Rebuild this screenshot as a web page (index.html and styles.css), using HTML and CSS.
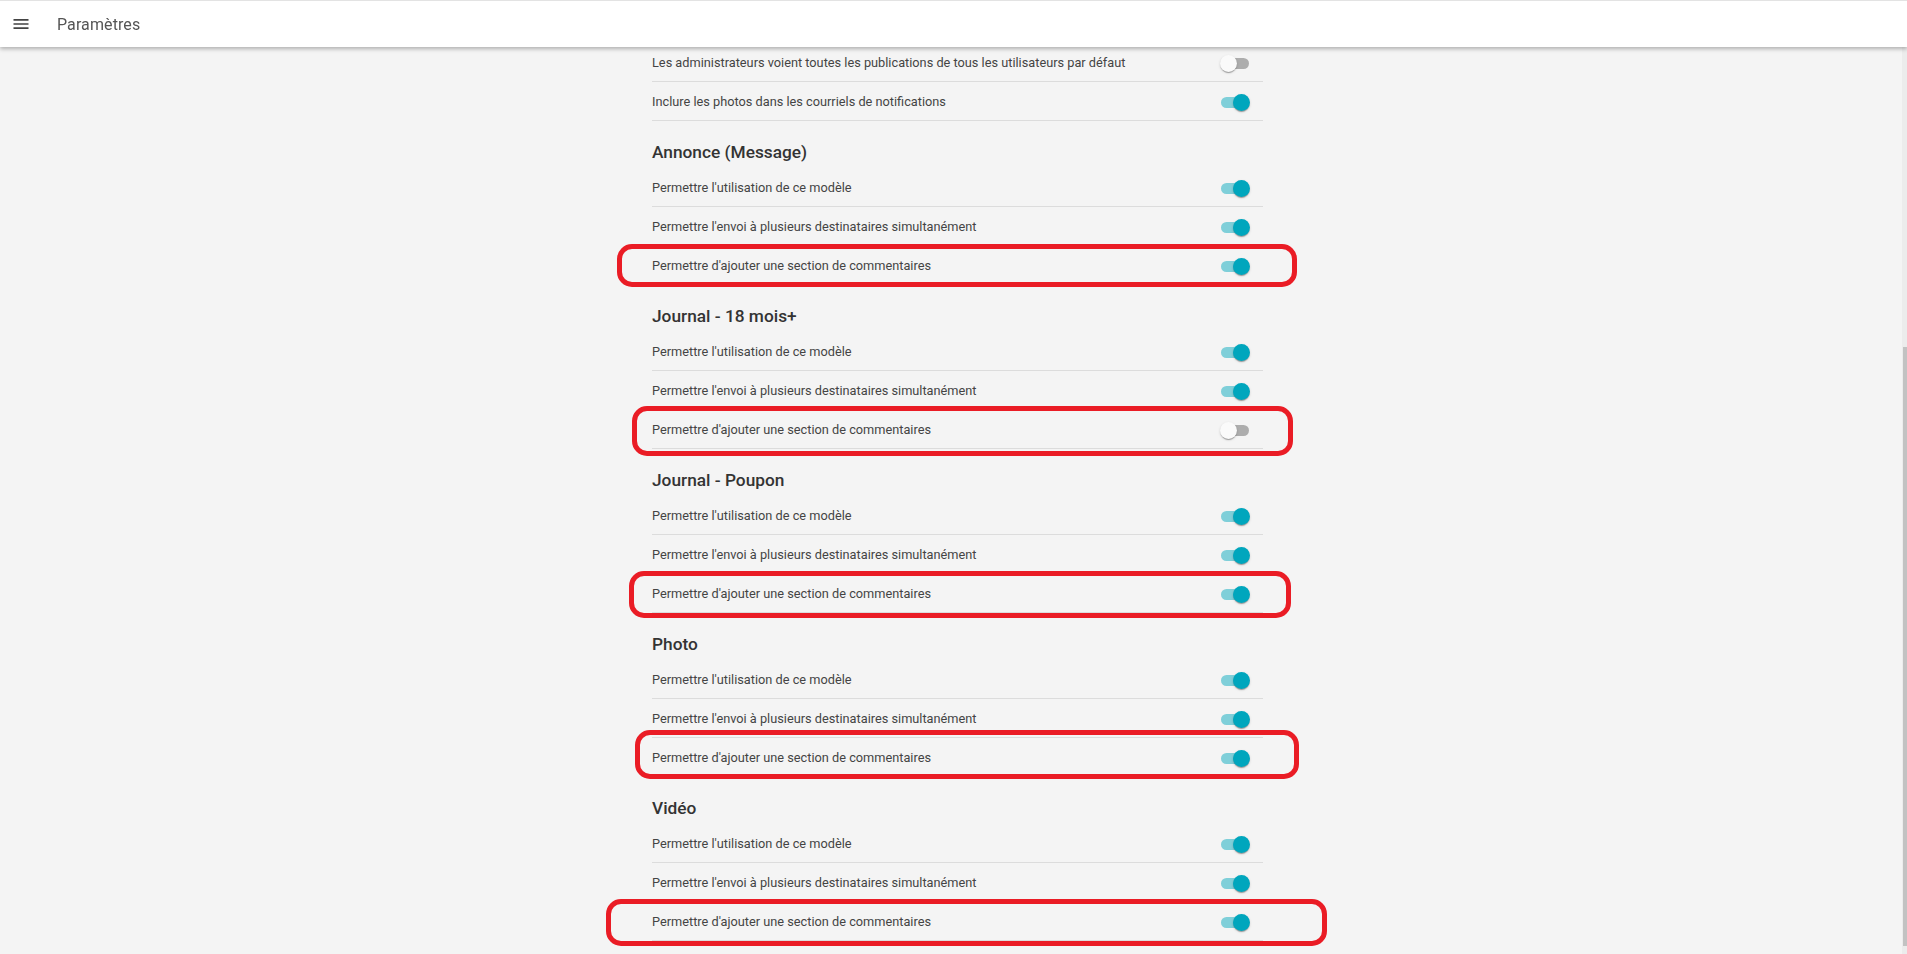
FILE: index.html
```html
<!DOCTYPE html>
<html lang="fr">
<head>
<meta charset="utf-8">
<title>Paramètres</title>
<link rel="stylesheet" href="styles.css">
</head>
<body>
<header class="topbar">
  <button class="menu-btn" aria-label="Menu">
    <svg viewBox="0 0 24 24" width="20" height="20"><path fill="#444" d="M3 18h18v-2H3v2zm0-5h18v-2H3v2zm0-7v2h18V6H3z"/></svg>
  </button>
  <span class="title">Paramètres</span>
</header>

<main class="settings">
  <div class="row"><span>Les administrateurs voient toutes les publications de tous les utilisateurs par défaut</span><span class="toggle"></span></div>
  <div class="row"><span>Inclure les photos dans les courriels de notifications</span><span class="toggle on"></span></div>

  <h2 class="section-title">Annonce (Message)</h2>
  <div class="row"><span>Permettre l'utilisation de ce modèle</span><span class="toggle on"></span></div>
  <div class="row"><span>Permettre l'envoi à plusieurs destinataires simultanément</span><span class="toggle on"></span></div>
  <div class="row"><span>Permettre d'ajouter une section de commentaires</span><span class="toggle on"></span><span class="mark mark-1"></span></div>

  <h2 class="section-title">Journal - 18 mois+</h2>
  <div class="row"><span>Permettre l'utilisation de ce modèle</span><span class="toggle on"></span></div>
  <div class="row"><span>Permettre l'envoi à plusieurs destinataires simultanément</span><span class="toggle on"></span></div>
  <div class="row"><span>Permettre d'ajouter une section de commentaires</span><span class="toggle"></span><span class="mark mark-2"></span></div>

  <h2 class="section-title">Journal - Poupon</h2>
  <div class="row"><span>Permettre l'utilisation de ce modèle</span><span class="toggle on"></span></div>
  <div class="row"><span>Permettre l'envoi à plusieurs destinataires simultanément</span><span class="toggle on"></span></div>
  <div class="row"><span>Permettre d'ajouter une section de commentaires</span><span class="toggle on"></span><span class="mark mark-3"></span></div>

  <h2 class="section-title">Photo</h2>
  <div class="row"><span>Permettre l'utilisation de ce modèle</span><span class="toggle on"></span></div>
  <div class="row"><span>Permettre l'envoi à plusieurs destinataires simultanément</span><span class="toggle on"></span></div>
  <div class="row"><span>Permettre d'ajouter une section de commentaires</span><span class="toggle on"></span><span class="mark mark-4"></span></div>

  <h2 class="section-title">Vidéo</h2>
  <div class="row"><span>Permettre l'utilisation de ce modèle</span><span class="toggle on"></span></div>
  <div class="row"><span>Permettre l'envoi à plusieurs destinataires simultanément</span><span class="toggle on"></span></div>
  <div class="row"><span>Permettre d'ajouter une section de commentaires</span><span class="toggle on"></span><span class="mark mark-5"></span></div>
</main>

<div class="scrollbar"><div class="scrollbar-thumb"></div></div>
</body>
</html>
```

FILE: styles.css
```css
html, body {
  margin: 0;
  height: 100%;
  overflow: hidden;
}
body {
  background: #f4f4f4;
  font-family: Roboto, "Liberation Sans", Arial, sans-serif;
  color: #444;
}

.topbar {
  position: fixed;
  top: 0;
  left: 0;
  right: 0;
  height: 46px;
  background: #fff;
  border-top: 1px solid #e3e3e3;
  box-shadow: 0 2px 4px rgba(0, 0, 0, 0.28);
  display: flex;
  align-items: center;
  z-index: 10;
}
.menu-btn {
  border: 0;
  background: none;
  padding: 0;
  margin-left: 11px;
  width: 20px;
  height: 20px;
  display: flex;
}
.title {
  margin-left: 26px;
  font-size: 16px;
  color: #555;
  letter-spacing: 0.1px;
}

.settings {
  width: 611px;
  margin-left: 652px;
  padding-top: 43px;
}

.row {
  position: relative;
  display: flex;
  align-items: center;
  justify-content: space-between;
  height: 38px;
  padding-right: 13px;
  border-bottom: 1px solid #dcdcdc;
  font-size: 12.75px;
  color: #444;
}

.section-title {
  margin: 0;
  padding: 19px 0 4px;
  line-height: 24px;
  font-size: 17.3px;
  font-weight: 500;
  color: #333;
}

.toggle {
  position: relative;
  width: 30px;
  height: 17px;
  flex: none;
  margin-top: 2px;
}
.toggle::before {
  content: "";
  position: absolute;
  left: 1px;
  top: 3px;
  width: 28px;
  height: 11px;
  border-radius: 6px;
  background: #adadad;
}
.toggle::after {
  content: "";
  position: absolute;
  left: 0;
  top: 0;
  width: 17px;
  height: 17px;
  border-radius: 50%;
  background: #fafafa;
  box-shadow: 0 2px 1px -1px rgba(0, 0, 0, 0.2), 0 1px 1px 0 rgba(0, 0, 0, 0.14), 0 1px 3px 0 rgba(0, 0, 0, 0.12);
}
.toggle.on::before {
  background: #7fcfd9;
}
.toggle.on::after {
  left: 13px;
  background: #00a6bd;
}

.mark {
  position: absolute;
  box-sizing: border-box;
  border: 5px solid #ea1c25;
  border-radius: 15px;
  pointer-events: none;
}
.mark-1 { left: -35px; top: -2px; width: 680px; height: 43px; }
.mark-2 { left: -20px; top: -4px; width: 661px; height: 50px; }
.mark-3 { left: -23px; top: -3px; width: 662px; height: 47px; }
.mark-4 { left: -17px; top: -8px; width: 664px; height: 49px; }
.mark-5 { left: -46px; top: -3px; width: 721px; height: 47px; }

.scrollbar {
  position: fixed;
  top: 47px;
  right: 0;
  bottom: 0;
  width: 5px;
  background: #ececec;
}
.scrollbar-thumb {
  margin-top: 300px;
  margin-left: 1px;
  width: 4px;
  height: 599px;
  background: #c2c2c2;
}
```
